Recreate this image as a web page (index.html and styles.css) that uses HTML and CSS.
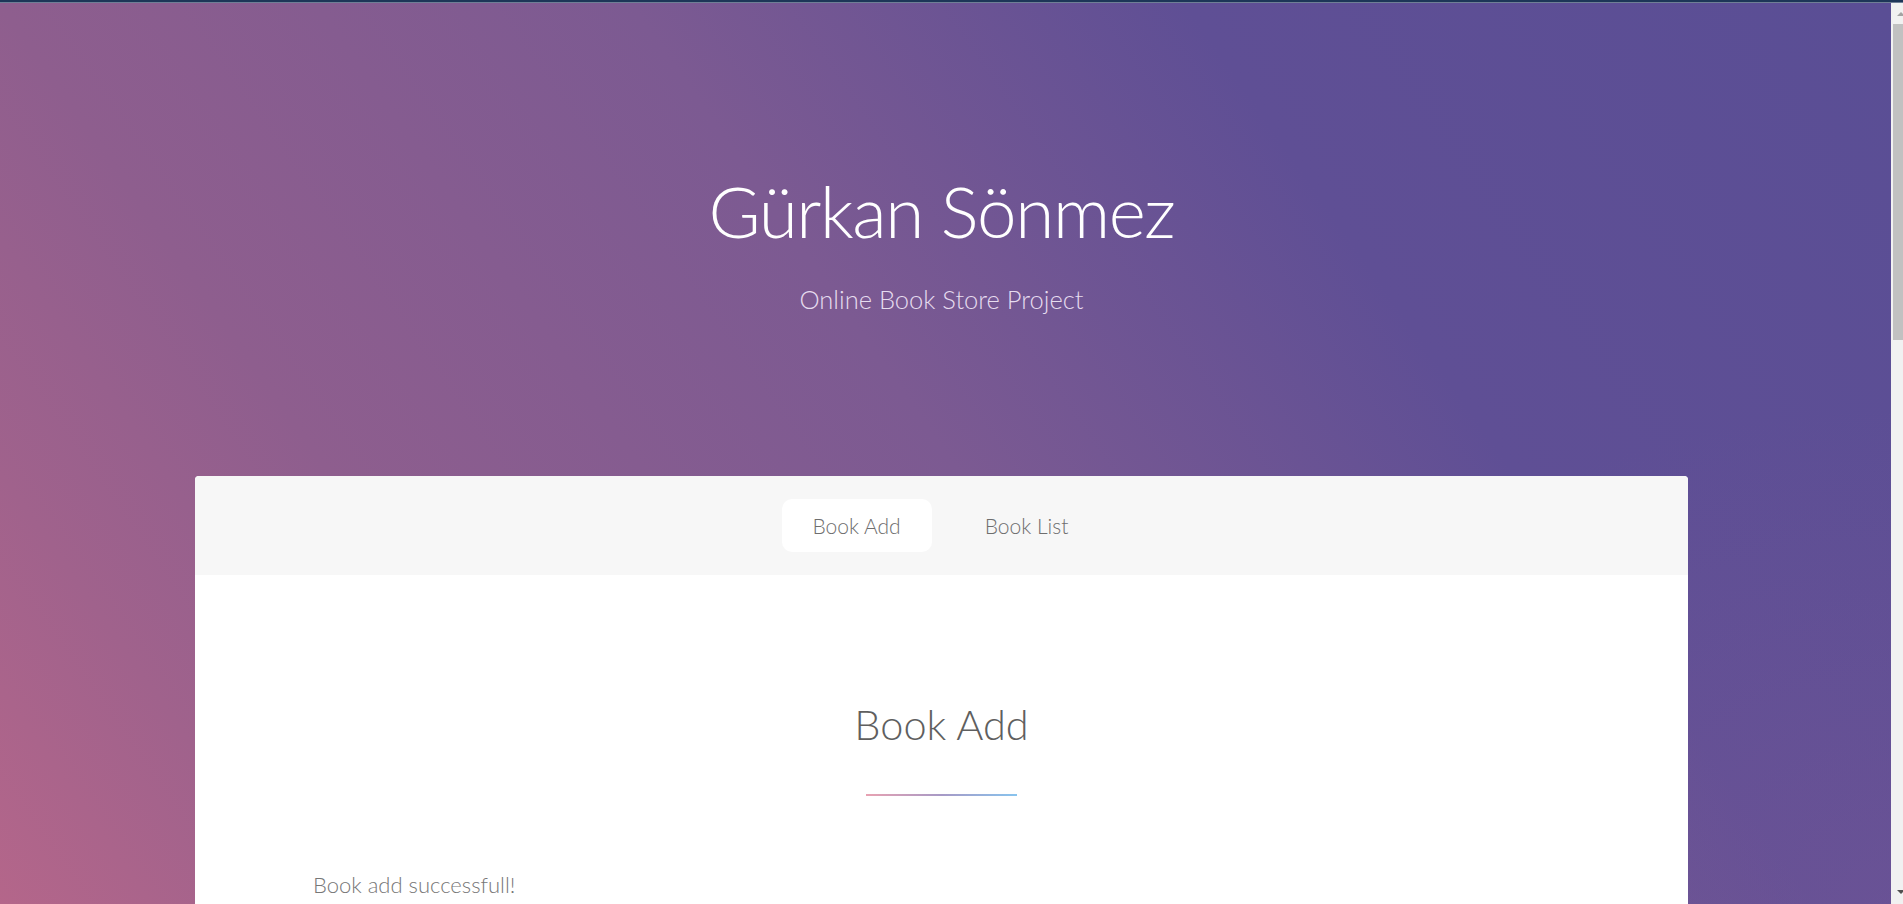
FILE: index.html
```html
<!DOCTYPE html>
<html lang="en">
<head>
<meta charset="utf-8">
<title>Gürkan Sönmez - Online Book Store</title>
<link rel="stylesheet" href="styles.css">
</head>
<body>
<div class="topbar"></div>
<div class="viewport">
  <main class="page">
    <header class="hero">
      <h1 class="hero-title">Gürkan Sönmez</h1>
      <p class="hero-sub">Online Book Store Project</p>
    </header>
    <section class="card">
      <nav class="card-head">
        <a class="tab tab-active" href="#">Book Add</a>
        <a class="tab" href="#">Book List</a>
      </nav>
      <div class="card-body">
        <h2 class="section-title">Book Add</h2>
        <div class="divider"></div>
        <p class="message">Book add successfull!</p>
      </div>
    </section>
  </main>
  <div class="scrollbar">
    <div class="sb-btn"><span class="arrow-up"></span></div>
    <div class="sb-track"><div class="sb-thumb"></div></div>
    <div class="sb-btn sb-btn-bottom"><span class="arrow-down"></span></div>
  </div>
</div>
</body>
</html>
```
FILE: styles.css
```css
html, body {
  margin: 0;
  padding: 0;
  height: 100%;
  overflow: hidden;
}
body {
  font-family: "Lato", "Open Sans", sans-serif;
  font-weight: 300;
  display: flex;
  flex-direction: column;
}
.topbar {
  height: 2px;
  background: #1d3658;
  border-bottom: 1px solid #6f7f96;
  flex: none;
}
.viewport {
  flex: 1;
  display: flex;
  min-height: 0;
}
.page {
  flex: 1;
  min-width: 0;
  padding-right: 8px;
  overflow: hidden;
  background:
    radial-gradient(ellipse 35% 55% at 100% 100%, rgba(125, 88, 150, 0.35), rgba(125, 88, 150, 0) 100%),
    linear-gradient(55deg, #b4668a 0%, #a0628c 12%, #8e5e8e 25%, #7c5a92 50%, #5f4f95 72%, #5a4e95 100%);
}
.hero {
  padding-top: 172px;
  text-align: center;
  color: #fff;
}
.hero-title {
  margin: 0;
  font-size: 71px;
  font-weight: 300;
  letter-spacing: -1.4px;
  line-height: 1;
}
.hero-sub {
  margin: 41px 0 0;
  font-size: 25.5px;
  line-height: 1;
  color: #e6dcef;
}
.card {
  width: 1493px;
  margin: 163px auto 0;
  background: #fff;
  border-radius: 4px 4px 0 0;
  overflow: hidden;
}
.card-head {
  background: #f7f7f7;
  padding: 23px 0;
  display: flex;
  justify-content: center;
  gap: 20px;
}
.tab {
  display: block;
  width: 150px;
  box-sizing: border-box;
  text-align: center;
  height: 53px;
  line-height: 53px;
  font-size: 21px;
  color: #6e6e6e;
  text-decoration: none;
  border-radius: 10px;
}
.tab-active {
  background: #fff;
}
.card-body {
  padding: 129px 118px 200px;
}
.section-title {
  margin: 0;
  text-align: center;
  font-size: 41.5px;
  font-weight: 300;
  line-height: 1;
  color: #5f5f5f;
}
.divider {
  width: 151px;
  height: 2px;
  margin: 49px auto 0;
  background: linear-gradient(to right, #e8a2b2, #a79ac6 50%, #88c4ee);
}
.message {
  margin: 78px 0 0;
  font-size: 22px;
  line-height: 1;
  color: #777;
}
.scrollbar {
  width: 12px;
  flex: none;
  background: #f1f1f1;
  display: flex;
  flex-direction: column;
  overflow: hidden;
}
.sb-btn {
  height: 21px;
  flex: none;
  position: relative;
}
.sb-btn-bottom {
  margin-top: auto;
}
.sb-track {
  height: 316px;
  padding-left: 2px;
}
.sb-thumb {
  height: 100%;
  background: #c1c1c1;
}
.arrow-up, .arrow-down {
  position: absolute;
  left: 6px;
  width: 0;
  height: 0;
  border-left: 4px solid transparent;
  border-right: 4px solid transparent;
}
.arrow-up {
  top: 9px;
  border-bottom: 4px solid #a3a3a3;
}
.arrow-down {
  top: 7px;
  border-top: 4px solid #505050;
}
```
